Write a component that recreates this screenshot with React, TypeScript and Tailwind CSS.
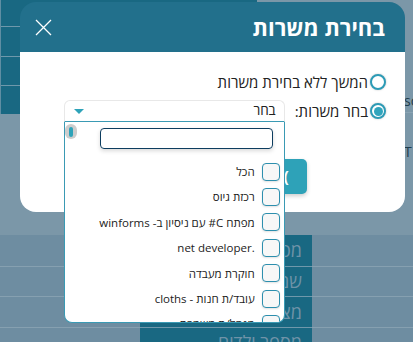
export default function App() {
  const items = [
    'הכל',
    'רכזת גיוס',
    'מפתח C# עם ניסיון ב- winforms',
    '.net developer',
    'חוקרת מעבדה',
    'עובד/ת חנות - cloths',
    'מנהל/ת משמרת',
  ];
  const rows = ['מספר זהות', 'שם פרטי', 'מצב משפחתי', 'מספר ילדים'];
  return (
    <div className="relative w-[413px] h-[342px] overflow-hidden bg-[#7b97a8] font-['Open_Sans','DejaVu_Sans',sans-serif]">
      {/* underlying page (dimmed) */}
      <div className="flex h-[235px]">
        <div className="w-[20px] flex flex-col self-start border-l border-[#5f8ea3]">
          <div className="h-[27px] bg-[#196882] border-b border-[#6f98ab]" />
          <div className="h-[30px] bg-[#196882] border-b border-[#6f98ab]" />
          <div className="h-[29px] bg-[#196882] border-b border-[#6f98ab]" />
          <div className="h-[28px] bg-[#196882]" />
        </div>
        <div className="flex-1">
          <div className="h-[20px] w-[237px] bg-[#196882]" />
        </div>
        <div className="w-[9px] overflow-hidden pt-[93px] text-[14px] leading-[16px] text-[#1f3c4c]">
          <div className="h-[20px] border-b border-[#8aa3b3] whitespace-nowrap">sc</div>
          <div className="mt-[31px] whitespace-nowrap">T</div>
        </div>
      </div>
      <div className="grid grid-cols-[140px_172px_1fr] bg-[#6e8da1]">
        {rows.map((r, i) => (
          <div key={i} className="contents">
            <div className={`h-[30.7px] ${i > 0 ? 'border-t border-[#86a0b0]' : ''}`} />
            <div
              dir="rtl"
              className={`h-[30.7px] bg-[#196882] flex items-center pr-[10px] text-[18px] text-[#6f93a8] whitespace-nowrap overflow-hidden ${i > 0 ? 'border-t border-[#6f98ab]' : ''}`}
            >
              {r}
            </div>
            <div className={`h-[30.7px] ${i > 0 ? 'border-t border-[#86a0b0]' : ''}`} />
          </div>
        ))}
      </div>

      {/* modal */}
      <div dir="rtl" className="absolute left-[20px] top-[2px] w-[385px]">
        <div className="h-[50px] bg-[#22708c] rounded-t-[16px] flex items-center justify-between pr-[20px] pl-[15px]">
          <div className="text-white font-bold text-[22px] leading-none">בחירת משרות</div>
          <svg width="17" height="17" viewBox="0 0 17 17" className="block">
            <path d="M1 1 L16 16 M16 1 L1 16" stroke="#ffffff" strokeWidth="1.3" fill="none" />
          </svg>
        </div>
        <div className="h-[160px] bg-white rounded-b-[16px] pt-[20px]">
          <div className="flex items-center h-[20px] pr-[19px] gap-[2px]">
            <div className="w-[16px] h-[16px] rounded-full border-2 border-[#2c9bb6] bg-white shadow-[0_0_2px_rgba(0,0,0,0.25)]" />
            <span className="text-[15px] text-[#222] leading-none whitespace-nowrap">המשך ללא בחירת משרות</span>
          </div>
          <div className="mt-[8px] flex items-center h-[22px] pr-[19px] gap-[2px]">
            <div className="w-[16px] h-[16px] rounded-full border-2 border-[#2c9bb6] bg-white p-[1.5px] shadow-[0_0_2px_rgba(0,0,0,0.25)]">
              <div className="w-full h-full rounded-full bg-[#31a4bc]" />
            </div>
            <span className="text-[15px] text-[#222] leading-none whitespace-nowrap">בחר משרות:</span>
            <div className="relative mr-[8px] w-[221px] h-[22px] border border-[#e8e8e8] border-b-[#3a9ab4] rounded-t-[6px] flex items-center justify-between pr-[8px] pl-[9px] bg-white">
              <span className="text-[13.5px] text-[#222] leading-none">בחר</span>
              <svg width="10" height="5" viewBox="0 0 10 5" className="block">
                <path d="M0 0 L10 0 L5 5 Z" fill="#2ea3b9" />
              </svg>
              <div className="absolute top-[21px] -left-px -right-px h-[201px] bg-white border border-t-0 border-[#3a9ab4] rounded-b-[8px] overflow-hidden z-10">
                <div className="absolute left-0 top-[2px] w-[12px] h-[15px] rounded-full bg-[#cdcdcd] flex items-center justify-center">
                  <div className="w-[4px] h-[10px] rounded-full bg-[#2ea3b9]" />
                </div>
                <div className="mt-[6px] ml-[35px] mr-[11px] h-[21px] border-[1.5px] border-[#0d3d5f] rounded-[4px] shadow-[0_2px_4px_rgba(0,0,0,0.15)]" />
                <div className="mt-[10px] flex flex-col">
                  {items.map((t, i) => (
                    <div key={i} className="h-[25.4px] shrink-0 flex items-center pr-[4px] gap-[7px]">
                      <div className="w-[18px] h-[18px] shrink-0 rounded-[4px] border-[1.5px] border-[#2d8fae] bg-[#f7f7f7] shadow-[0_1px_2px_rgba(0,0,0,0.12)]" />
                      <span className="text-[11.5px] text-[#222] leading-none whitespace-nowrap">{t}</span>
                    </div>
                  ))}
                </div>
              </div>
            </div>
          </div>
          <div className="mt-[37px] flex justify-center">
            <div className="w-[189px] h-[35px] rounded-[5px] bg-[#2ea2b8] shadow-[0_2px_4px_rgba(0,0,0,0.2)] flex items-center justify-start pr-[18px] text-white font-bold text-[16px]">
              <span>)</span>
            </div>
          </div>
        </div>
      </div>
    </div>
  );
}
